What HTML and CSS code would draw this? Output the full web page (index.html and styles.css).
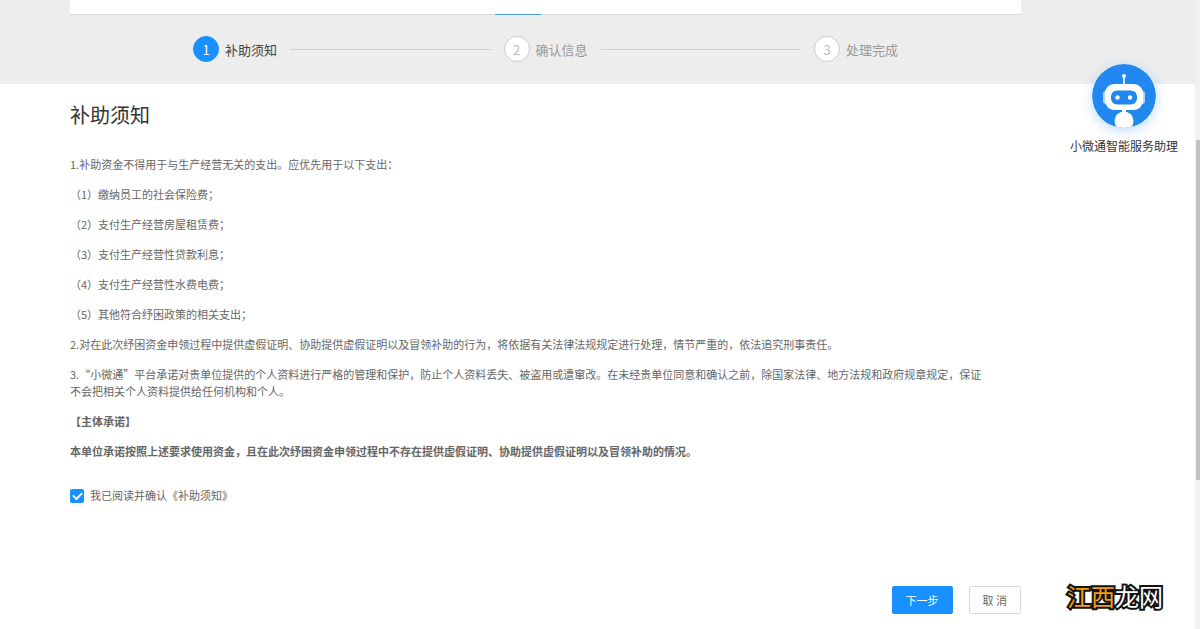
FILE: index.html
```html
<!DOCTYPE html>
<html lang="zh-CN">
<head>
<meta charset="utf-8">
<title>补助须知</title>
<link rel="stylesheet" href="styles.css">
</head>
<body>
<div class="page">
  <div class="view">
    <header class="band">
      <div class="tabs"><span class="tab-mark"></span></div>
      <ol class="steps">
        <li class="step active"><span class="num">1</span><span>补助须知</span></li>
        <li class="line" role="presentation"></li>
        <li class="step"><span class="num">2</span><span>确认信息</span></li>
        <li class="line" role="presentation"></li>
        <li class="step"><span class="num">3</span><span>处理完成</span></li>
      </ol>
    </header>
    <main class="content">
      <h1 class="title">补助须知</h1>
      <div class="notice">
        <p>1.补助资金不得用于与生产经营无关的支出。应优先用于以下支出：</p>
        <p>（1）缴纳员工的社会保险费；</p>
        <p>（2）支付生产经营房屋租赁费；</p>
        <p>（3）支付生产经营性贷款利息；</p>
        <p>（4）支付生产经营性水费电费；</p>
        <p>（5）其他符合纾困政策的相关支出；</p>
        <p>2.对在此次纾困资金申领过程中提供虚假证明、协助提供虚假证明以及冒领补助的行为，将依据有关法律法规规定进行处理，情节严重的，依法追究刑事责任。</p>
        <p>3.“小微通”平台承诺对贵单位提供的个人资料进行严格的管理和保护，防止个人资料丢失、被盗用或遭窜改。在未经贵单位同意和确认之前，除国家法律、地方法规和政府规章规定，保证<br>不会把相关个人资料提供给任何机构和个人。</p>
        <p class="strong">【主体承诺】</p>
        <p class="strong">本单位承诺按照上述要求使用资金，且在此次纾困资金申领过程中不存在提供虚假证明、协助提供虚假证明以及冒领补助的情况。</p>
      </div>
      <div class="agree">
        <input class="check" type="checkbox" id="agree" checked>
        <label for="agree">我已阅读并确认《补助须知》</label>
      </div>
      <div class="actions">
        <button class="btn primary" type="button">下一步</button>
        <button class="btn" type="button">取 消</button>
      </div>
    </main>
    <a class="helper" href="#">
      <svg class="robot" viewBox="0 0 64 64" aria-hidden="true">
        <defs><clipPath id="disc"><circle cx="32" cy="32" r="32"/></clipPath></defs>
        <circle cx="32" cy="32" r="32" fill="#2088ee"/>
        <g clip-path="url(#disc)" fill="#fff">
          <circle cx="32" cy="12" r="2"/>
          <rect x="31.2" y="12" width="1.6" height="9"/>
          <rect x="11" y="27" width="42" height="13" rx="3" fill="#b5d7fa"/>
          <rect x="13" y="20" width="38" height="26" rx="9"/>
          <rect x="19" y="26.500" width="26" height="14" rx="6" fill="#2088ee"/>
          <circle cx="25.500" cy="33.500" r="2.200"/>
          <circle cx="38" cy="33.500" r="2.200"/>
          <rect x="30" y="45" width="4" height="4"/>
          <circle cx="32" cy="57" r="9.500"/>
        </g>
      </svg>
      <span>小微通智能服务助理</span>
    </a>
    <div class="mark"><span class="gold">江西</span>龙网</div>
  </div>
  <div class="scroll"><div class="thumb"></div></div>
</div>
</body>
</html>
```
FILE: styles.css
```css
* { box-sizing: border-box; }
body {
  margin: 0;
  background: #fff;
  color: #666;
  font-family: "Noto Sans CJK SC", sans-serif;
  font-size: 11px;
  line-height: 17px;
}
p, h1, ol { margin: 0; padding: 0; }
.page { display: flex; min-height: 100vh; }
.view { position: relative; flex: 1; min-width: 0; }

.band { background: #ededed; padding: 0 174px 22px 70px; }
.tabs {
  display: flex;
  align-items: flex-end;
  height: 15px;
  padding-left: 425px;
  background: linear-gradient(#fff, #fff) 0 0 / 100% 14px no-repeat #d8d8d8;
}
.tab-mark { width: 46px; height: 1px; background: #4a9be0; }
.steps {
  display: flex;
  align-items: center;
  gap: 13px;
  margin: 21px 123px 0;
  list-style: none;
  font-size: 13px;
}
.step { display: flex; align-items: center; gap: 6px; color: #999; }
.step.active { color: #444; }
.num {
  display: grid;
  place-items: center;
  width: 26px;
  height: 26px;
  border: 1px solid #ccc;
  border-radius: 50%;
  background: #fff;
  color: #bbb;
}
.active .num { border-color: #1890ff; background: #1890ff; color: #fff; }
.line { flex: 1; height: 1px; background: #d0d0d0; }

.content { padding: 15px 174px 16px 70px; }
.title { font-size: 20px; line-height: 32px; font-weight: 400; color: #333; }
.notice { display: flex; flex-direction: column; gap: 13px; margin-top: 25px; }
.strong { font-weight: 700; }

.agree { display: flex; align-items: center; gap: 6px; margin-top: 27px; }
.check {
  appearance: none;
  width: 14px;
  height: 14px;
  margin: 0;
  border-radius: 2px;
  background: #1890ff;
  display: grid;
  place-items: center;
}
.check:checked::before {
  content: "";
  width: 7px;
  height: 4px;
  margin-bottom: 2px;
  border: solid #fff;
  border-width: 0 0 2px 2px;
  transform: rotate(-45deg);
}
.actions { display: flex; justify-content: flex-end; gap: 16px; margin-top: 82px; }
.btn {
  height: 28px;
  padding: 0 13px;
  border: 1px solid #d9d9d9;
  border-radius: 2px;
  background: #fff;
  color: #666;
  font: inherit;
}
.btn.primary { border-color: #1890ff; background: #1890ff; color: #fff; }

.helper {
  position: absolute;
  top: 64px;
  right: 17px;
  display: flex;
  flex-direction: column;
  align-items: center;
  gap: 9px;
  color: #333;
  font-size: 12px;
  text-decoration: none;
}
.robot {
  width: 64px;
  height: 64px;
  border-radius: 50%;
  box-shadow: 0 3px 12px rgba(32, 136, 238, 0.3);
}
.mark {
  position: absolute;
  right: 32px;
  bottom: 18px;
  font-size: 24px;
  line-height: 32px;
  color: #fff;
  -webkit-text-stroke: 4px #111;
  paint-order: stroke fill;
}
.gold { color: #f39c12; }

.scroll { width: 5px; padding: 140px 0 0 1px; background: #f1f1f1; }
.thumb { height: 340px; background: #c1c1c1; }
```
